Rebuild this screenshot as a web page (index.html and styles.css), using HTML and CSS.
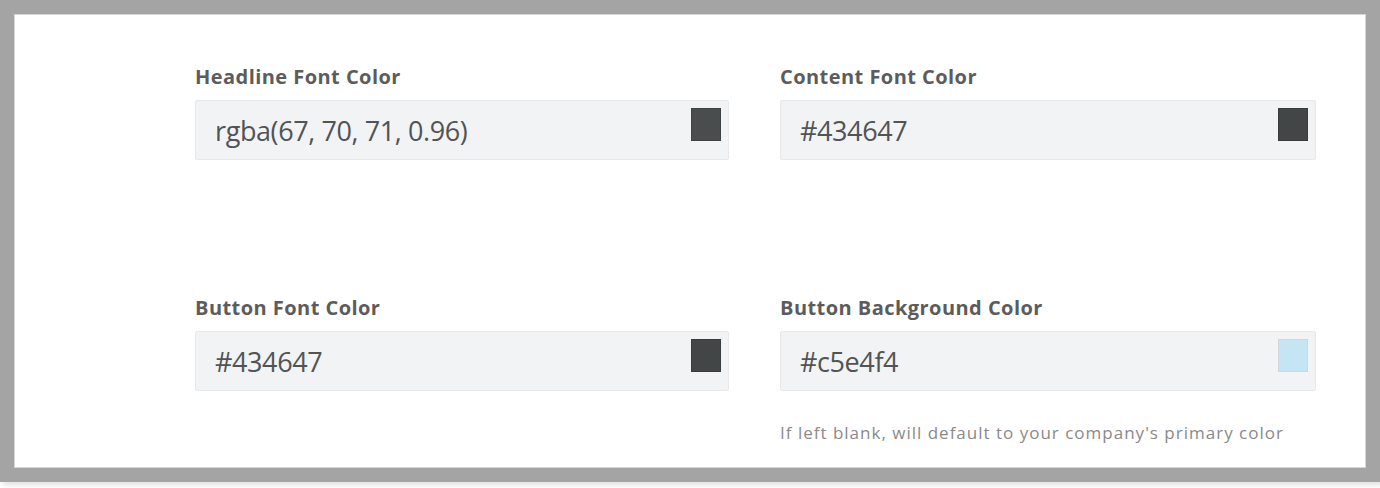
FILE: index.html
```html
<!DOCTYPE html>
<html lang="en">
<head>
    <meta charset="UTF-8">
    <title>Color Settings</title>
    <link rel="stylesheet" href="styles.css">
</head>
<body>

    <div class="frame">
        <div class="panel">
            <div class="color-grid">
                <div class="field">
                    <label class="field-label">Headline Font Color</label>
                    <div class="color-input">
                        <span class="color-value">rgba(67, 70, 71, 0.96)</span>
                        <span class="swatch" style="background: rgba(67, 70, 71, 0.96)"></span>
                    </div>
                </div>
                <div class="field">
                    <label class="field-label">Content Font Color</label>
                    <div class="color-input">
                        <span class="color-value">#434647</span>
                        <span class="swatch" style="background: #434647"></span>
                    </div>
                </div>
                <div class="field">
                    <label class="field-label">Button Font Color</label>
                    <div class="color-input">
                        <span class="color-value">#434647</span>
                        <span class="swatch" style="background: #434647"></span>
                    </div>
                </div>
                <div class="field">
                    <label class="field-label">Button Background Color</label>
                    <div class="color-input">
                        <span class="color-value">#c5e4f4</span>
                        <span class="swatch swatch-light" style="background: #c5e4f4"></span>
                    </div>
                    <p class="field-help">If left blank, will default to your company's primary color</p>
                </div>
            </div>
        </div>
    </div>

</body>
</html>
```

FILE: styles.css
```css
/* Color settings panel */
:root {
    --frame-grey: #a4a4a4;
    --label-color: #5c5c5c;
    --value-color: #515355;
    --input-bg: #f2f3f4;
    --input-border: #e6e8ea;
    --help-color: #8a8a8a;
}

html, body {
    margin: 0;
    height: 100%;
    overflow: hidden;
}

body {
    background: #fff;
    font-family: 'Open Sans', 'Noto Sans', sans-serif;
}

.frame {
    height: 482px;
    box-sizing: border-box;
    padding: 14px;
    background: var(--frame-grey);
    box-shadow: 3px 3px 5px rgba(0, 0, 0, 0.12);
}

.panel {
    height: 100%;
    box-sizing: border-box;
    background: #fff;
    border: 1px solid #d6d6d6;
    padding: 50px 49px 0 180px;
}

.color-grid {
    display: grid;
    grid-template-columns: 534px 536px;
    column-gap: 51px;
    row-gap: 136px;
}

.field {
    display: flex;
    flex-direction: column;
}

.field-label {
    font-size: 20px;
    font-weight: 700;
    line-height: 24px;
    color: var(--label-color);
    margin-bottom: 11px;
    letter-spacing: 0.45px;
}

.color-input {
    position: relative;
    height: 60px;
    box-sizing: border-box;
    background: var(--input-bg);
    border: 1px solid var(--input-border);
    border-radius: 2px;
    display: flex;
    align-items: center;
    padding: 0 19px;
}

.color-value {
    font-size: 27px;
    color: var(--value-color);
    letter-spacing: -0.4px;
}

.swatch {
    position: absolute;
    top: 7px;
    right: 7px;
    width: 30px;
    height: 33px;
    box-sizing: border-box;
    border: 1px solid rgba(0, 0, 0, 0.15);
}

.swatch-light {
    border-color: #d2d6d8;
}

.field-help {
    margin: 32px 0 0;
    font-size: 17px;
    line-height: 20px;
    color: var(--help-color);
    letter-spacing: 1px;
}
```
